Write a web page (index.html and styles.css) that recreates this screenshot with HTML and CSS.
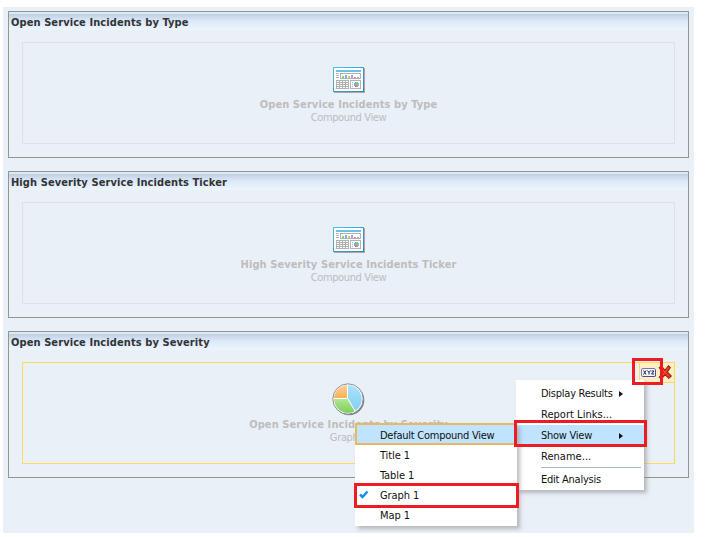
FILE: index.html
```html
<!DOCTYPE html>
<html lang="en">
<head>
<meta charset="utf-8">
<title>Dashboard Builder</title>
<link rel="stylesheet" href="styles.css">
</head>
<body>
<svg class="defs" width="0" height="0">
  <defs>
    <linearGradient id="frame" x2="1" y2="1"><stop offset="0" stop-color="#58bde6"/><stop offset="1" stop-color="#2c87ae"/></linearGradient>
    <linearGradient id="blue" x2="0" y2="1"><stop offset="0" stop-color="#a9e3ff"/><stop offset="1" stop-color="#83cff0"/></linearGradient>
    <linearGradient id="orange" x2="0" y2="1"><stop offset="0" stop-color="#ffd09a"/><stop offset="1" stop-color="#f9ad50"/></linearGradient>
    <linearGradient id="green" x2="0" y2="1"><stop offset="0" stop-color="#b2e696"/><stop offset="1" stop-color="#7dce5b"/></linearGradient>
    <symbol id="compound" viewBox="0 0 32 26" shape-rendering="crispEdges">
      <path fill="#a7a9ad" d="M1 1h31v25H1z"/>
      <path fill="url(#frame)" d="M0 0h31v25H0z"/>
      <path fill="#fff" d="M1 1h29v23H1z"/>
      <path fill="#65c3e8" d="M3 3h25v2H3z"/>
      <path fill="#b2b2b2" d="M3 6h3v1H3zm0 2h3v1H3zm0 2h3v1H3zM7 6h21v6H7zM3 13h13v9H3zm14 0h11v9H17z"/>
      <path fill="#fff" d="M8 7h19v4H8zm-4 7h2v1H4zm3 0h2v1H7zm3 0h2v1h-2zm3 0h2v1h-2zm-9 2h2v1H4zm3 0h2v1H7zm3 0h2v1h-2zm3 0h2v1h-2zm-9 2h2v1H4zm3 0h2v1H7zm3 0h2v1h-2zm3 0h2v1h-2zm-9 2h2v1H4zm3 0h2v1H7zm3 0h2v1h-2zm3 0h2v1h-2zm5-6h9v7h-9z"/>
      <path fill="#7ed45c" d="M9 9h2v2H9z"/><path fill="#55c1eb" d="M12 8h2v3h-2z"/><path fill="#f8b45c" d="M15 9h2v2h-2z"/><path fill="#a99aeb" d="M18 8h2v3h-2zm6 2h2v1h-2z"/><path fill="#f473b1" d="M21 10h2v1h-2z"/>
      <path fill="#b2b2b2" d="M19 15h1v1h-1zm0 2h1v1h-1zm0 2h1v1h-1z"/>
      <path fill="#79d46e" d="M22 15h3v1h1v3h-2v-1h-3v-2h1z"/><path fill="#56bdea" d="M22 15h1v3h-2v-2h1z"/><path fill="#f269ab" d="M21 18h3v2h-2v-1h-1z"/><path fill="#a99aeb" d="M24 18h2v1h-1v1h-1z"/>
    </symbol>
  </defs>
</svg>
<main class="canvas">
  <section class="panel">
    <h2 class="panel-title">Open Service Incidents by Type</h2>
    <div class="view">
      <svg class="compound" width="32" height="26"><use href="#compound"/></svg>
      <strong>Open Service Incidents by Type</strong>
      <span class="kind">Compound View</span>
    </div>
  </section>
  <section class="panel">
    <h2 class="panel-title">High Severity Service Incidents Ticker</h2>
    <div class="view">
      <svg class="compound" width="32" height="26"><use href="#compound"/></svg>
      <strong>High Severity Service Incidents Ticker</strong>
      <span class="kind">Compound View</span>
    </div>
  </section>
  <section class="panel">
    <h2 class="panel-title">Open Service Incidents by Severity</h2>
    <div class="view selected">
      <svg class="pie" width="33" height="33" viewBox="0 0 33 33">
        <circle cx="17" cy="17" r="15.3" fill="#777c80"/>
        <circle cx="16" cy="16" r="15.2" fill="#fff" stroke="#8b9094"/>
        <path fill="url(#blue)" d="M16 16V2a14 14 0 0 1 7 26z"/>
        <path fill="url(#green)" d="M16 16l7 12A14 14 0 0 1 2 16z"/>
        <path fill="url(#orange)" d="M16 16H2A14 14 0 0 1 16 2z"/>
        <path fill="none" stroke="#fff" d="M15.500 2v13.500H2M16 16l7 12"/>
      </svg>
      <strong>Open Service Incidents by Severity</strong>
      <span class="kind">Graph 1</span>
      <div class="tools">
        <svg width="34" height="19" viewBox="0 0 34 19">
          <rect x="1.500" y="5.500" width="14" height="8" rx="1.500" fill="#f3f5ff" stroke="#7478b7"/>
          <path d="M3 13.500h11.500q1 0 1-1V7" fill="none" stroke="#4a4c98"/>
          <path d="M3.500 7.500l2.500 4M6 7.500l-2.500 4M7.500 7.500L9 9.500l1.500-2M9 9.500v2M11.500 8H14l-2.500 3H14" fill="none" stroke="#252b3c"/>
          <path d="M19 4.500L21.500 3l3.500 4 3.500-4.500 2 2-3 4.500 4 4-2.500 2.500-4-3.500-3 3.500-3-1 3.500-5z" fill="#e3210d" stroke="#7c291f"/>
          <path d="M20.500 4.500l8.500 9M28.500 4.500l-7 9" stroke="#ff5c35" fill="none"/>
        </svg>
      </div>
    </div>
  </section>
</main>
<nav class="menu main-menu">
  <div class="item"><span>Display Results</span><i class="arrow"></i></div>
  <div class="item"><span class="dots">Report Links...</span></div>
  <div class="item active"><span>Show View</span><i class="arrow"></i></div>
  <div class="item"><span class="dots">Rename...</span></div>
  <div class="item last"><span>Edit Analysis</span></div>
</nav>
<nav class="menu sub-menu">
  <div class="item active"><span>Default Compound View</span></div>
  <div class="item"><span class="numbered">Title 1</span></div>
  <div class="item"><span class="numbered">Table 1</span></div>
  <div class="item"><svg class="check" width="10" height="9" viewBox="0 0 10 9"><path d="M1 4.500l2.500 2.500L8.500 1.500" fill="none" stroke="#188ef0" stroke-width="2.500"/></svg><span class="numbered">Graph 1</span></div>
  <div class="item"><span class="numbered">Map 1</span></div>
</nav>
<div class="callout on-tools"></div>
<div class="callout on-show"></div>
<div class="callout on-graph"></div>
</body>
</html>
```
FILE: styles.css
```css
* { box-sizing: border-box; }
body { margin: 0; width: 709px; height: 537px; overflow: hidden; background: #fff; font: 11px/13px "DejaVu Sans Condensed", "DejaVu Sans", sans-serif; font-stretch: condensed; letter-spacing: -0.25px; color: #111; }
.defs { position: absolute; }
.canvas { width: 691px; height: 526px; margin: 7px 0 0 3px; padding: 4px 5px; background: #e9f0f8; display: flex; flex-direction: column; gap: 13px; }
.panel { height: 147px; border: 1px solid #92978e; }
.panel-title { margin: 0 0 12px; height: 18px; padding: 4px 2px 0; font-size: 11px; line-height: 14px; letter-spacing: 0.09px; color: #333; white-space: nowrap; background: linear-gradient(#dbe8f6 0 2px, #bfcfe1 2px, #dce9fa 9px, #edf5ff 18px); }
.view { position: relative; height: 102px; margin: 0 13px; border: 1px solid #e0e2df; display: flex; flex-direction: column; align-items: center; color: #bdbdbd; white-space: nowrap; }
.view strong { line-height: 14px; letter-spacing: 0.09px; }
.kind { margin-top: -1px; letter-spacing: -0.36px; }
.compound { margin: 24px 0 5px; }
.selected { border-color: #fddc59; }
.pie { margin: 20px 0 2px; }
.tools { position: absolute; top: -1px; right: -1px; width: 36px; height: 21px; border: 1px solid #fddc59; background: #ffedc5; }
.tools svg { display: block; }
.menu { position: absolute; background: #fff; box-shadow: 3px 3px 4px #8888; white-space: nowrap; }
.main-menu { left: 516px; top: 380px; width: 128px; height: 110px; padding-top: 3px; }
.item { display: flex; align-items: center; position: relative; }
.main-menu .item { height: 21px; padding-left: 25px; }
.main-menu .active { background: #c0e4ff; }
.main-menu .last { height: 22px; margin: 0 3px 0 25px; padding: 1px 0 0; border-top: 1px solid #a9b8cd; }
.dots { letter-spacing: 0.03px; }
.numbered { letter-spacing: -0.1px; }
.arrow { position: absolute; left: 103px; top: 8px; border: solid transparent; border-width: 3.500px 0 3.500px 4px; border-left-color: #111; }
.sub-menu { left: 355px; top: 423px; width: 162px; height: 103px; padding-top: 1px; }
.sub-menu .item { height: 20px; padding: 2px 0 0 25px; }
.sub-menu .active { height: 22px; margin: -1px 0; padding: 2px 0 0 23px; background: #c0e4ff; border: 2px solid #e8b960; }
.check { position: absolute; left: 4px; top: 6px; }
.callout { position: absolute; border: 3px solid #ed1c24; }
.on-tools { left: 632px; top: 358px; width: 31px; height: 27px; }
.on-show { left: 514px; top: 420px; width: 133px; height: 27px; }
.on-graph { left: 354px; top: 483px; width: 165px; height: 25px; }
```
